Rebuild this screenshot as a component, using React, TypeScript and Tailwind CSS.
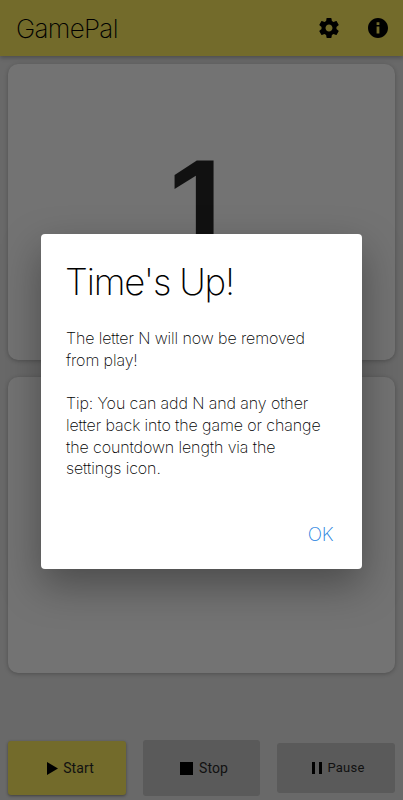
function GearIcon() {
  return (
    <svg viewBox="0 0 24 24" className="w-[24px] h-[24px]" fill="#000">
      <path d="M19.43 12.98c.04-.32.07-.64.07-.98s-.03-.66-.07-.98l2.11-1.65c.19-.15.24-.42.12-.64l-2-3.46c-.12-.22-.39-.3-.61-.22l-2.49 1c-.52-.4-1.08-.73-1.69-.98l-.38-2.65A.488.488 0 0 0 14 2h-4c-.25 0-.46.18-.49.42l-.38 2.65c-.61.25-1.17.59-1.69.98l-2.49-1c-.23-.09-.49 0-.61.22l-2 3.46c-.13.22-.07.49.12.64l2.11 1.65c-.04.32-.07.65-.07.98s.03.66.07.98l-2.11 1.65c-.19.15-.24.42-.12.64l2 3.46c.12.22.39.3.61.22l2.49-1c.52.4 1.08.73 1.69.98l.38 2.65c.03.24.24.42.49.42h4c.25 0 .46-.18.49-.42l.38-2.65c.61-.25 1.17-.59 1.69-.98l2.49 1c.23.09.49 0 .61-.22l2-3.46c.12-.22.07-.49-.12-.64l-2.11-1.65zM12 15.5c-1.93 0-3.5-1.57-3.5-3.5s1.57-3.5 3.5-3.5 3.5 1.57 3.5 3.5-1.57 3.5-3.5 3.5z" />
    </svg>
  );
}

function InfoIcon() {
  return (
    <svg viewBox="0 0 24 24" className="w-[24px] h-[24px]" fill="#000">
      <path d="M12 2C6.48 2 2 6.48 2 12s4.48 10 10 10 10-4.48 10-10S17.52 2 12 2zm1.4 15.5h-2.8v-7h2.8v7zm0-8.6h-2.8V6.3h2.8v2.6z" />
    </svg>
  );
}

export default function App() {
  return (
    <div className="relative w-[403px] h-[800px] overflow-hidden flex flex-col bg-[#696969] font-['Inter',sans-serif]">
      {/* top bar */}
      <div className="h-[56px] bg-[#736b2b] flex items-center pl-[16px] shadow-[0_2px_4px_rgba(0,0,0,0.25)]">
        <h1 className="flex-1 text-[26px] font-extralight text-black tracking-[-0.7px]">GamePal</h1>
        <div className="mr-[25px]"><GearIcon /></div>
        <div className="mr-[13px]"><InfoIcon /></div>
      </div>

      {/* cards */}
      <div className="flex flex-col gap-[17px] px-[8px] pt-[8px]">
        <div className="h-[296px] rounded-[10px] bg-[#737373] shadow-[0_1px_4px_rgba(0,0,0,0.25)] flex items-center justify-center">
          <span className="text-[129px] leading-none font-bold text-[#111] font-['Liberation_Sans',sans-serif] translate-y-[-7px]">1</span>
        </div>
        <div className="h-[296px] rounded-[10px] bg-[#737373] shadow-[0_1px_4px_rgba(0,0,0,0.25)]"></div>
      </div>

      {/* buttons */}
      <div className="mt-auto mb-[4px] px-[8px] flex items-center justify-between">
        <button className="w-[118px] h-[54px] pl-[7px] rounded-[3px] bg-[#736b2b] shadow-[0_1px_3px_rgba(0,0,0,0.4)] flex items-center justify-center gap-[5px] text-[14px] text-[#111] tracking-[0.1px] font-['Roboto',sans-serif]">
          <svg viewBox="0 0 11 13" className="w-[11px] h-[13px]" fill="#000"><path d="M0 0l11 6.5L0 13z" /></svg>
          Start
        </button>
        <button className="w-[117px] h-[56px] pl-[5px] rounded-[3px] bg-[#5a5a5a] flex items-center justify-center gap-[6px] text-[14px] text-[#111] tracking-[0.1px] font-['Roboto',sans-serif]">
          <span className="w-[13px] h-[13px] bg-black"></span>
          Stop
        </button>
        <button className="w-[118px] h-[50px] pl-[4px] rounded-[3px] bg-[#5a5a5a] flex items-center justify-center gap-[6px] text-[13px] text-[#111] tracking-[0.2px] font-['Roboto',sans-serif]">
          <span className="flex gap-[4px]">
            <span className="w-[3px] h-[12px] bg-black"></span>
            <span className="w-[3px] h-[12px] bg-black"></span>
          </span>
          Pause
        </button>
      </div>

      {/* dialog */}
      <div className="absolute left-[41px] top-[234px] w-[321px] h-[335px] rounded-[4px] bg-white shadow-[0_16px_40px_rgba(0,0,0,0.35)] pl-[25px] pr-[24px] pt-[25px] flex flex-col">
        <h2 className="text-[36.5px] leading-[46px] font-extralight text-black tracking-[-1.2px] ml-[-1px]">Time's Up!</h2>
        <p className="mt-[23px] text-[16px] leading-[21.7px] font-extralight text-black tracking-[-0.1px] whitespace-nowrap">
          The letter N will now be removed
          <br />
          from play!
          <br />
          <br />
          Tip: You can add N and any other
          <br />
          letter back into the game or change
          <br />
          the countdown length via the
          <br />
          settings icon.
        </p>
        <button className="mt-auto mb-[25px] self-end mr-[5px] text-[19px] leading-none font-extralight text-[#1e7fe0] tracking-[-0.5px]">OK</button>
      </div>
    </div>
  );
}
